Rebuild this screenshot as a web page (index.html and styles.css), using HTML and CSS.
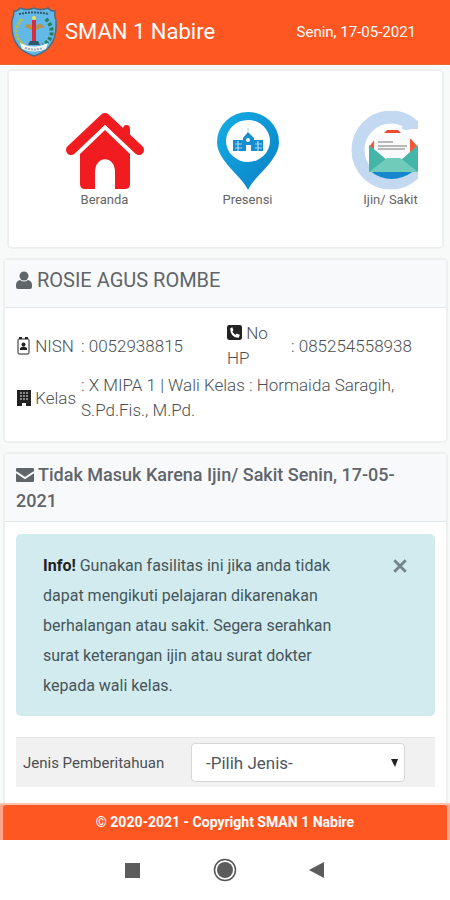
FILE: index.html
```html
<!DOCTYPE html>
<html lang="id">
<head>
    <meta charset="UTF-8">
    <meta name="viewport" content="width=device-width, initial-scale=1.0">
    <title>SMAN 1 Nabire</title>
    <link rel="stylesheet" href="styles.css">
</head>
<body>
    <header class="topbar">
        <svg class="logo" viewBox="0 0 48 50" aria-hidden="true">
            <path d="M4 4 Q8 4 10 1 Q17 4 24 1 Q31 4 38 1 Q40 4 45 4 Q44 9 46 13 C47 28 44 43 24 49 C4 43 1 28 2 13 Q4 9 4 4Z" fill="#62b8e6" stroke="#4e6d80" stroke-width="1.5"/>
            <path d="M9 7 Q24 4 39 7" fill="none" stroke="#35596f" stroke-width="2" stroke-dasharray="2 1"/>
            <path d="M12 12 C3 22 5 32 15 38" fill="none" stroke="#b7bd4e" stroke-width="3" stroke-dasharray="3 1"/>
            <path d="M36 12 C45 22 43 32 33 38" fill="none" stroke="#26815a" stroke-width="4" stroke-dasharray="3 2"/>
            <path d="M15 21 Q16 15 21 18 L24 20 L27 18 Q33 15 34 21 Q30 20 27 23 H21 Q18 20 15 21Z" fill="#b8944a"/>
            <rect x="22" y="13" width="4" height="21" fill="#d42e40"/>
            <circle cx="24" cy="11" r="2" fill="#f5e25c"/>
            <path d="M20 34 H28 L30 38 H18Z" fill="#34566d"/>
            <path d="M10 36 Q24 43 38 36 L36 42 Q24 47 12 42Z" fill="#f4f6f6"/>
            <path d="M15 41 Q24 44 33 41" fill="none" stroke="#9aabb4" stroke-width="2" stroke-dasharray="2 1"/>
        </svg>
        <h1 class="school">SMAN 1 Nabire</h1>
        <time class="date" datetime="2021-05-17">Senin, 17-05-2021</time>
    </header>

    <main class="content">
        <nav class="card menu">
            <div class="menu-scroll">
                <a class="menu-item" href="#beranda">
                    <svg viewBox="0 0 80 80" aria-hidden="true">
                        <path d="M58 22 V18 Q58 14 61.500 14 Q65 14 65 18 V32Z" fill="#f01c20"/>
                        <path d="M6 39 L40 7 L74 39" fill="none" stroke="#f01c20" stroke-width="10" stroke-linecap="round" stroke-linejoin="round"/>
                        <path d="M15 43 L40 19 L65 43 V73 Q65 78 60 78 H20 Q15 78 15 73Z" fill="#f01c20"/>
                        <path d="M10 45 L40 16 L70 45" fill="none" stroke="#fff" stroke-width="3"/>
                        <path d="M30 79 V61 C30 44 50 44 50 61 V79Z" fill="#fff"/>
                    </svg>
                    Beranda
                </a>
                <a class="menu-item" href="#presensi">
                    <svg viewBox="0 0 80 80" aria-hidden="true">
                        <defs>
                            <linearGradient id="pin" x1="0" y1="0" x2="1" y2="1">
                                <stop offset="0" stop-color="#16aee5"/>
                                <stop offset="1" stop-color="#087fc4"/>
                            </linearGradient>
                        </defs>
                        <path d="M40 79 C34 65 9 50 9 31 A31 30 0 0 1 71 31 C71 50 46 65 40 79Z" fill="url(#pin)"/>
                        <ellipse cx="40" cy="30" rx="22" ry="21" fill="#fff"/>
                        <path d="M25 29 H35 V27 L40 21 L46 27 V29 H55 V40 H43 V34 H38 V40 H25Z" fill="#158dd0"/>
                        <path d="M40 22 V17 M27 33 H34 M27 37 H34 M47 33 H54 M47 37 H54" stroke="#a6d6ef" stroke-width="1"/>
                        <path d="M30 30 V40 M50 30 V40" stroke="#c9e7f6" stroke-width="1"/>
                        <circle cx="40" cy="29" r="2" fill="#fff"/>
                    </svg>
                    Presensi
                </a>
                <a class="menu-item" href="#ijin">
                    <svg viewBox="0 0 80 80" aria-hidden="true">
                        <circle cx="40" cy="39" r="33" fill="#fff" stroke="#c3d8f1" stroke-width="13"/>
                        <path d="M54 18 H80 V44 H68 L58 25Z" fill="#fff"/>
                        <path d="M52 10 L70 14 V18 H60 Q55 20 51 18Z" fill="#c3d8f1"/>
                        <path d="M19 60 Q40 76 63 60Z" fill="#1686ce"/>
                        <path d="M18 36 L24 28 H60 L67 36 V52 H18Z" fill="#ef5936"/>
                        <path d="M33 22 L36 19 H47 L50 22Z" fill="#ed4c32"/>
                        <rect x="23" y="22" width="36" height="31" fill="#fafafa"/>
                        <path d="M27 31 H42 M27 35 H56 M27 38 H54" stroke="#b9b9b9" stroke-width="2"/>
                        <path d="M18 34 L36 49 H50 L67 34 V61 H18Z" fill="#45b5a9"/>
                        <path d="M18 61 L36 47 H49 L67 61Z" fill="#70cbbb"/>
                    </svg>
                    Ijin/ Sakit
                </a>
            </div>
        </nav>

        <section class="card">
            <h2 class="card-header name">
                <svg class="icon" viewBox="0 0 16 18" aria-hidden="true">
                    <circle cx="8" cy="5" r="4.5" fill="currentColor"/>
                    <path d="M4 9 Q8 12 12 9 Q16 10 16 14 V16 Q16 18 14 18 H2 Q0 18 0 16 V14 Q0 10 4 9Z" fill="currentColor"/>
                </svg>
                ROSIE AGUS ROMBE
            </h2>
            <div class="profile">
                <table>
                    <tr>
                        <th scope="row">
                            <svg class="icon-dark" viewBox="0 0 14 18" aria-hidden="true">
                                <rect x="1" y="2" width="11" height="15" rx="1" fill="none" stroke="currentColor" stroke-width="1"/>
                                <path d="M2 1 H5 M8 1 H11" stroke="currentColor" stroke-width="2"/>
                                <circle cx="6.500" cy="7.500" r="2" fill="currentColor"/>
                                <path d="M3 13 V11 Q6.500 8 10 11 V13Z" fill="currentColor"/>
                            </svg>
                            NISN
                        </th>
                        <td class="nisn">: 0052938815</td>
                        <th scope="row" class="phone">
                            <svg class="icon-phone" viewBox="0 0 14 14" aria-hidden="true">
                                <rect width="14" height="14" rx="2" fill="currentColor"/>
                                <path d="M3 3 L5 2 L6 5 L5 6 Q6 8 8 9 L9 8 L12 9 L11 12 Q3 12 3 3Z" fill="#fff"/>
                            </svg>
                            No HP
                        </th>
                        <td>: 085254558938</td>
                    </tr>
                    <tr>
                        <th scope="row">
                            <svg class="icon-dark" viewBox="0 0 14 18" aria-hidden="true">
                                <path d="M0 1 H14 V17 H9 V14 H5 V17 H0Z" fill="currentColor"/>
                                <path d="M3 4 H11 M3 7 H11 M3 10 H11" stroke="#aaa" stroke-width="1.500" stroke-dasharray="2 1"/>
                            </svg>
                            Kelas
                        </th>
                        <td colspan="3">: X MIPA 1 | Wali Kelas : Hormaida Saragih, S.Pd.Fis., M.Pd.</td>
                    </tr>
                </table>
            </div>
        </section>

        <section class="card absence">
            <h2 class="card-header">
                <svg class="icon-mail" viewBox="0 0 18 14" aria-hidden="true">
                    <rect width="18" height="14" rx="1" fill="currentColor"/>
                    <path d="M0 4 L9 10 L18 4" fill="none" stroke="#f8f9fa" stroke-width="2"/>
                </svg>
                Tidak Masuk Karena Ijin/ Sakit Senin, 17-05-2021
            </h2>
            <div class="absence-body">
                <div class="alert">
                    <p><strong>Info!</strong> Gunakan fasilitas ini jika anda tidak dapat mengikuti pelajaran dikarenakan berhalangan atau sakit. Segera serahkan surat keterangan ijin atau surat dokter kepada wali kelas.</p>
                    <button class="close" type="button" aria-label="Tutup">
                        <svg viewBox="0 0 14 14" aria-hidden="true">
                            <path d="M2 2 L12 12 M12 2 L2 12" stroke="currentColor" stroke-width="2.5"/>
                        </svg>
                    </button>
                </div>
                <div class="form-row">
                    <label for="jenis">Jenis Pemberitahuan</label>
                    <select id="jenis">
                        <option>-Pilih Jenis-</option>
                    </select>
                </div>
            </div>
        </section>
    </main>

    <footer class="footer">
        <div class="copyright">© 2020-2021 - Copyright SMAN 1 Nabire</div>
    </footer>

    <div class="system-nav">
        <button type="button" aria-label="Aplikasi">
            <svg viewBox="0 0 24 24"><rect x="4" y="5" width="15" height="15" fill="#5c5c5c"/></svg>
        </button>
        <button type="button" aria-label="Layar utama">
            <svg viewBox="0 0 24 24">
                <circle cx="12" cy="12" r="10.500" fill="none" stroke="#555" stroke-width="1.500"/>
                <circle cx="12" cy="12" r="8" fill="#5c5c5c"/>
            </svg>
        </button>
        <button type="button" aria-label="Kembali">
            <svg viewBox="0 0 24 24"><path d="M19 4 V20 L4 12Z" fill="#5c5c5c"/></svg>
        </button>
    </div>
</body>
</html>
```
FILE: styles.css
```css
* {
    margin: 0;
    padding: 0;
    box-sizing: border-box;
}

body {
    display: flex;
    flex-direction: column;
    min-height: 100vh;
    background: #f8f9f9;
    color: #4c4f52;
    font-family: Roboto, "Liberation Sans", sans-serif;
    font-size: 17px;
}

svg {
    display: block;
}

.topbar {
    display: flex;
    align-items: center;
    height: 65px;
    padding: 0 34px 0 10px;
    background: #ff5722;
    border-bottom: 1px solid #f0642f;
    color: #fff;
}

.logo {
    width: 48px;
    height: 50px;
    margin-right: 7px;
}

.school {
    font-size: 22px;
    font-weight: 400;
    line-height: 28px;
}

.date {
    margin-left: auto;
    font-size: 15px;
}

.content {
    flex: 1;
    display: flex;
    flex-direction: column;
    gap: 9px;
    padding: 4px 2px 0 3px;
}

.card {
    background: #fff;
    border: 2px solid #eef0f0;
    border-radius: 5px;
}

.menu {
    margin: 0 4px;
    padding: 40px 24px 38px;
}

.menu-scroll {
    display: flex;
    overflow: hidden;
}

.menu-item {
    flex: 0 0 143px;
    display: flex;
    flex-direction: column;
    align-items: center;
    color: #666;
    font-size: 13px;
    line-height: 18px;
    text-decoration: none;
}

.menu-item svg {
    width: 80px;
    height: 80px;
}

.card-header {
    padding: 8px 50px 7px 11px;
    background: #f8f9fb;
    border-bottom: 1px solid #e4e7e9;
    color: #60656a;
    font-size: 18px;
    font-weight: 500;
    line-height: 26px;
}

.card-header.name {
    padding-top: 7px;
    padding-bottom: 14px;
    font-size: 20px;
    font-weight: 400;
}

.icon,
.icon-dark,
.icon-phone,
.icon-mail {
    display: inline-block;
}

.icon {
    width: 16px;
    height: 18px;
    vertical-align: -2px;
}

.icon-dark {
    width: 14px;
    height: 18px;
    vertical-align: -3px;
    color: #222;
}

.icon-phone {
    width: 15px;
    height: 15px;
    vertical-align: -1px;
    color: #222;
}

.icon-mail {
    width: 18px;
    height: 14px;
    vertical-align: -1px;
}

.profile {
    padding: 12px 11px 17px 12px;
}

.profile table {
    width: 100%;
    table-layout: fixed;
    border-collapse: collapse;
    font-weight: 300;
    line-height: 25px;
}

.profile th {
    width: 64px;
    padding: 1px 0;
    font-weight: 300;
    text-align: left;
}

.profile td {
    padding: 1px 0;
}

.profile .nisn {
    width: 146px;
}

.profile .phone {
    padding-right: 20px;
}

.absence {
    flex: 1;
    border-bottom: 0;
    border-radius: 5px 5px 0 0;
}

.absence-body {
    padding: 12px 11px 16px;
}

.alert {
    display: flex;
    justify-content: space-between;
    padding: 17px 27px 15px;
    background: #d1ebef;
    border-radius: 5px;
    color: #46555a;
    font-size: 16px;
    line-height: 30px;
}

.alert p {
    max-width: 300px;
}

.alert strong {
    color: #1d2224;
    font-weight: 700;
}

.close {
    align-self: flex-start;
    margin-top: 7px;
    background: none;
    border: 0;
    color: #74858a;
}

.close svg {
    width: 16px;
    height: 16px;
}

.form-row {
    display: flex;
    align-items: center;
    justify-content: space-between;
    margin-top: 21px;
    padding: 5px 30px 5px 7px;
    background: #f1f1f1;
    border-top: 1px solid #e6e6e6;
    font-size: 15px;
}

select {
    width: 214px;
    height: 39px;
    padding: 0 14px;
    appearance: none;
    background: #fff url("data:image/svg+xml,%3Csvg xmlns='http://www.w3.org/2000/svg' width='7' height='8'%3E%3Cpath d='M0 0H7L4 8Z' fill='%23222'/%3E%3C/svg%3E") no-repeat right 6px center;
    border: 1px solid #d3d7da;
    border-radius: 4px;
    color: #50565c;
    font-family: inherit;
    font-size: 17px;
}

.footer {
    padding: 0 3px;
    background: #ffa58a;
    border-top: 2px solid #ffc2b0;
}

.copyright {
    background: #ff5722;
    border-radius: 3px 3px 0 0;
    color: #fff;
    font-size: 14px;
    font-weight: 700;
    line-height: 35px;
    text-align: center;
}

.system-nav {
    display: flex;
    justify-content: center;
    align-items: center;
    gap: 68px;
    height: 60px;
    background: #fff;
}

.system-nav button {
    width: 24px;
    height: 24px;
    background: none;
    border: 0;
}
```
